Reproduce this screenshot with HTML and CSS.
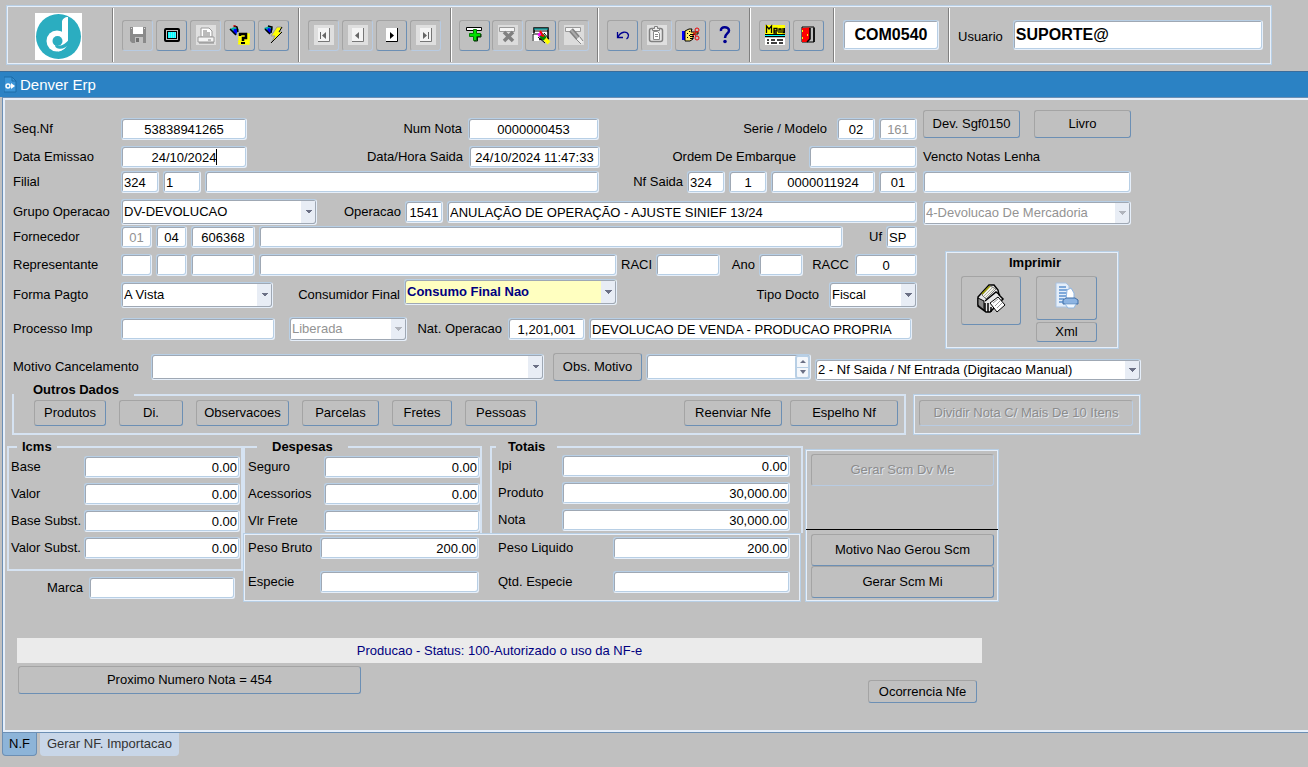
FILE: index.html
```
<!DOCTYPE html>
<html lang="pt-BR">
<head>
    <meta charset="UTF-8">
    <meta name="viewport" content="width=device-width, initial-scale=1.0">
    <title>Denver Erp</title>
    <link rel="stylesheet" href="styles.css">
</head>
<body>
    <header class="toolbar">
        <div class="logo">
            <svg width="47" height="47" viewBox="0 0 47 47">
                <rect width="47" height="47" fill="#fff"/>
                <circle cx="23.5" cy="23.5" r="22.5" fill="#2badc0"/>
                <circle cx="22" cy="28" r="10.5" fill="#fff"/>
                <path d="M27 9C27 6 30 4 33 4V28C33 33 29 38 23 38.500L27 22Z" fill="#fff"/>
                <circle cx="22.500" cy="28" r="5" fill="#2badc0"/>
                <path d="M20 32C26 34 31 31 34 26V31C31 35 27 36.500 23 35.500C21 35 20 34 20 32Z" fill="#2badc0"/>
            </svg>
        </div>
        <div class="group">
            <button class="tool" disabled aria-label="Salvar">
                <svg width="20" height="20" viewBox="0 0 20 20"><path d="M2 2H18V18H4L2 16Z" fill="#8a8a8a"/><path d="M7 12H15V18H7Z" fill="#c0c0c0"/><path d="M5 2H15V9H5Z" fill="#fff"/><path d="M8 13H11V17H8Z" fill="#707070"/><path d="M16 3H17V4H16ZM3 3H4V4H3Z" fill="#ddd"/></svg>
            </button>
            <button class="tool" aria-label="Tela">
                <svg width="20" height="20" viewBox="0 0 20 20"><rect x="3" y="4" width="14" height="12" rx="1" fill="none" stroke="#000" stroke-width="2"/><rect x="5.500" y="6.500" width="9" height="7" fill="#0ff" stroke="#000"/><path d="M7 8H14M7 10H14M7 12H14" stroke="#a8e8ff" stroke-dasharray="1 1"/></svg>
            </button>
            <button class="tool" disabled aria-label="Imprimir">
                <svg width="20" height="20" viewBox="0 0 20 20"><rect width="20" height="20" fill="#dfdfdf"/><path d="M5 3H13L16 6V12H5Z" fill="#fff" stroke="#9a9a9a"/><path d="M7 6H11M7 8H14M7 10H14" stroke="#777"/><path d="M2 12H18V17H2Z" fill="#f4f4f4" stroke="#999"/><path d="M3 18H18M12 15H15" stroke="#888"/></svg>
            </button>
            <button class="tool" aria-label="Entrar consulta">
                <svg width="22" height="22" viewBox="0 0 22 22"><path d="M9 9H21V21H9Z" fill="#ff0" stroke="#c0c0c0" stroke-dasharray="1 1"/><path d="M1 5L5 3L10 5L7 11L4 9Z" fill="#0aa"/><path d="M5 5L9 5L7 11L4 8Z" fill="#00f"/><path d="M5 2L8 3L9 8M1 5L7 11" stroke="#000" stroke-width="1.500" fill="none"/><path d="M4 2H7" stroke="#e00"/><path d="M11 12V10H17V14H14V17" fill="none" stroke="#000" stroke-width="2.500"/><path d="M12 19H16" stroke="#000" stroke-width="2"/></svg>
            </button>
            <button class="tool" aria-label="Executar consulta">
                <svg width="22" height="22" viewBox="0 0 22 22"><path d="M1 4L7 2L10 5L7 10L4 8Z" fill="#0aa"/><path d="M5 4L9 5L7 10L4 7Z" fill="#00f"/><path d="M5 2L9 3L8 9M2 5L7 10" stroke="#000" stroke-width="1.500" fill="none"/><path d="M14 3H19L16 8H19L8 19L12 12H8Z" fill="#ff0" stroke="#999"/><path d="M19 3L16 8M19 8L8 19" stroke="#000" fill="none"/></svg>
            </button>
        </div>
        <div class="group">
            <button class="tool" disabled aria-label="Primeiro">
                <svg width="20" height="20" viewBox="0 0 20 20"><rect width="20" height="20" fill="#dfdfdf"/><path d="M4 3H15V16H4Z" fill="#f4f4f4"/><path d="M4 16.500H15.500V3" fill="none" stroke="#777"/><path d="M6 7H7V14H6ZM12 7V14L8 10.500Z" fill="#666"/></svg>
            </button>
            <button class="tool" disabled aria-label="Anterior">
                <svg width="20" height="20" viewBox="0 0 20 20"><rect width="20" height="20" fill="#dfdfdf"/><path d="M4 3H15V16H4Z" fill="#f4f4f4"/><path d="M4 16.500H15.500V3" fill="none" stroke="#777"/><path d="M11 7V14L7 10.500Z" fill="#666"/></svg>
            </button>
            <button class="tool" aria-label="Proximo">
                <svg width="20" height="20" viewBox="0 0 20 20"><path d="M4 3H15V16H4Z" fill="#fff"/><path d="M4 16.500H15.500V3" fill="none" stroke="#000"/><path d="M8 7V14L12 10.500Z" fill="#000"/></svg>
            </button>
            <button class="tool" disabled aria-label="Ultimo">
                <svg width="20" height="20" viewBox="0 0 20 20"><rect width="20" height="20" fill="#dfdfdf"/><path d="M4 3H15V16H4Z" fill="#f4f4f4"/><path d="M4 16.500H15.500V3" fill="none" stroke="#777"/><path d="M7 7V14L11 10.500ZM12 7H13V14H12Z" fill="#666"/></svg>
            </button>
        </div>
        <div class="group tight">
            <button class="tool" aria-label="Inserir">
                <svg width="20" height="20" viewBox="0 0 20 20"><path d="M1.500 2.500H16.500V5.500H1.500Z" fill="#fff" stroke="#000"/><path d="M8.500 4.500H11.500V8.500H15.500V11.500H11.500V15.500H8.500V11.500H4.500V8.500H8.500Z" fill="#00e000" stroke="#008000"/><path d="M9 16H12.500V12H16V9" stroke="#002800" fill="none"/></svg>
            </button>
            <button class="tool" disabled aria-label="Remover">
                <svg width="20" height="20" viewBox="0 0 20 20"><rect width="20" height="20" fill="#dcdcdc"/><path d="M1.500 2.500H16.500V6.500H1.500Z" fill="#f4f4f4" stroke="#999"/><path d="M6 7L15 16M15 7L6 16" stroke="#808080" stroke-width="3.500"/></svg>
            </button>
            <button class="tool" aria-label="Limpar formulario">
                <svg width="20" height="20" viewBox="0 0 20 20"><path d="M3 3H17V14H3Z" fill="#fff" stroke="#000" stroke-width="1.500"/><path d="M3 4H17" stroke="#088" stroke-width="1.500"/><path d="M3 6H17" stroke="#000"/><path d="M1 8H8V16H1Z" fill="#fff"/><path d="M2 16V9H8" stroke="#000" fill="none"/><path d="M8 8L11 11" stroke="#f0f" stroke-width="5"/><path d="M9 6L11 9" stroke="#f00" stroke-width="2"/><path d="M10 10L14 14" stroke="#080" stroke-width="5"/><path d="M10 10L13 11" stroke="#f00" stroke-width="2"/><path d="M14 14L18 18" stroke="#ff0" stroke-width="4"/><path d="M13 8L18 14M7 12L14 18" stroke="#000"/></svg>
            </button>
            <button class="tool" disabled aria-label="Limpar registro">
                <svg width="20" height="20" viewBox="0 0 20 20"><rect width="20" height="20" fill="#dcdcdc"/><path d="M1.500 2.500H16.500V6.500H1.500Z" fill="#f4f4f4" stroke="#999"/><path d="M7 5L14 13" stroke="#808080" stroke-width="5"/><path d="M7 5L14 13" stroke="#aaa" stroke-width="2"/><path d="M14 13L18 18" stroke="#eee" stroke-width="3"/><path d="M12 14L17 19M16 12L19 16" stroke="#888"/></svg>
            </button>
        </div>
        <div class="group">
            <button class="tool" aria-label="Desfazer">
                <svg width="20" height="20" viewBox="0 0 20 20"><path d="M4.500 7V12.500H10M5 12C8 6 14 6 15.500 10C15.500 12 15 13 13.500 14" fill="none" stroke="#000090" stroke-width="1.300"/></svg>
            </button>
            <button class="tool" disabled aria-label="Colar">
                <svg width="20" height="20" viewBox="0 0 20 20"><rect width="20" height="20" fill="#dfdfdf"/><rect x="2.500" y="3.500" width="13" height="13" rx="2" fill="#e8e8e8" stroke="#808080" stroke-width="1.500"/><path d="M5.500 5.500H12.500V3.500H10.500V1.500H7.500V3.500H5.500Z" fill="#eee" stroke="#808080"/><path d="M6.500 6.500H10.500L12.500 8.500V14.500H6.500Z" fill="#fff" stroke="#888"/><path d="M8 9.500H11M8 11.500H11" stroke="#888"/></svg>
            </button>
            <button class="tool" aria-label="Listar">
                <svg width="20" height="20" viewBox="0 0 20 20"><path d="M1 6H4V15H1Z" fill="#00f"/><path d="M4 6L8 4H11L10 7H17V9H12V14L9 16H4Z" fill="#ffe96a" stroke="#000"/><path d="M6 8H7V9H6ZM8 10H9V11H8ZM6 12H7V13H6ZM8 6H9V7H8Z" fill="#000"/><path d="M9 9.500H14M9 11.500H13M9 13.500H12" stroke="#000"/><circle cx="16" cy="5" r="2" fill="none" stroke="#e00"/><circle cx="16" cy="13" r="2" fill="none" stroke="#e00"/><path d="M12 11L15 7M12 7L15 11" stroke="#e00"/></svg>
            </button>
            <button class="tool" aria-label="Ajuda">
                <svg width="20" height="20" viewBox="0 0 20 20"><path d="M6 6C5 1 14 1 14 5.500C14 8.500 10 8.500 10 13" fill="none" stroke="#000090" stroke-width="2.500"/><circle cx="10" cy="16.500" r="1.800" fill="#000090"/></svg>
            </button>
        </div>
        <div class="group">
            <button class="tool" aria-label="Menu">
                <svg width="20" height="22" viewBox="0 0 20 22"><path d="M0 1H20V10H0Z" fill="#ff0"/><path d="M1.500 9V2L4 5L6.500 2V9M9 7H12V4.500H9V9H12M14 9V5H16V9M18 4V8.500H19.500V4" fill="none" stroke="#000" stroke-width="1.300"/><path d="M0 10H20V13H0Z" fill="#000"/><path d="M0 11.500H20" stroke="#0ff"/><path d="M0 14H20V21H0Z" fill="#fff"/><path d="M2 16H4M6 16H10M12 16H18M2 19H4M6 19H12M14 19H18" stroke="#000" stroke-width="1.500"/></svg>
            </button>
            <button class="tool" aria-label="Sair">
                <svg width="20" height="20" viewBox="0 0 20 20"><path d="M3 2H15V17H3Z" fill="#c0c0c0" stroke="#000"/><path d="M3 3L11 2.500V14L8 17H3Z" fill="#f00"/><path d="M11 3V14L8 17M15 3V17" fill="none" stroke="#000" stroke-width="1.500"/><path d="M3 5H4V7H3ZM3 12H4V14H3ZM8 9H9V11H8Z" fill="#ff0"/></svg>
            </button>
        </div>
        <div class="group">
            <input class="big code" type="text" value="COM0540" aria-label="Programa">
        </div>
        <div class="group user">
            <label for="usuario">Usuario</label>
            <input class="big" id="usuario" type="text" value="SUPORTE@">
        </div>
    </header>

    <div class="titlebar">
        <svg width="14" height="17" viewBox="0 0 14 17"><path d="M0 1H8L12 5V16H0Z" fill="#3b95d8" stroke="#1c6ca8"/><path d="M8 1V5H12" fill="none" stroke="#1c6ca8"/><circle cx="4" cy="10" r="2" fill="none" stroke="#fff" stroke-width="1.500"/><path d="M7 7V13L11 10Z" fill="#fff"/></svg>
        <h1>Denver Erp</h1>
    </div>

    <main class="panel">
        <form class="nota">
            <div class="top">
                <div class="left">
                    <div class="row">
                        <label class="first" for="seq">Seq.Nf</label>
                        <input class="w126 center" id="seq" type="text" value="53838941265">
                        <label class="grow right" for="num">Num Nota</label>
                        <input class="w131 center" id="num" type="text" value="0000000453">
                        <label class="w230 right far" for="serie">Serie / Modelo</label>
                        <input class="w38 center" id="serie" type="text" value="02">
                        <input class="w38 center" type="text" value="161" disabled aria-label="Modelo">
                    </div>
                    <div class="row gap6">
                        <label class="first" for="emissao">Data Emissao</label>
                        <span class="date">
                            <input class="w126 center" id="emissao" type="text" value="24/10/2024">
                            <span class="caret"></span>
                        </span>
                        <label class="grow right" for="saida">Data/Hora Saida</label>
                        <input class="w131 center" id="saida" type="text" value="24/10/2024 11:47:33">
                        <label class="w201 right farther" for="ordem">Ordem De Embarque</label>
                        <input class="w108" id="ordem" type="text">
                    </div>
                    <div class="row gap3">
                        <label class="first" for="filial">Filial</label>
                        <input class="w38" id="filial" type="text" value="324">
                        <input class="w38" type="text" value="1" aria-label="Filial codigo">
                        <input class="grow" type="text" aria-label="Filial nome">
                        <label class="w80 right flush" for="nfsaida">Nf Saida</label>
                        <input class="w38" id="nfsaida" type="text" value="324">
                        <input class="w38 center" type="text" value="1" aria-label="Nf Saida filial">
                        <input class="w104 center" type="text" value="0000011924" aria-label="Nf Saida numero">
                        <input class="w38 center" type="text" value="01" aria-label="Nf Saida serie">
                    </div>
                    <div class="row gap6">
                        <label class="first" for="grupo">Grupo Operacao</label>
                        <select class="w196 tall" id="grupo"><option>DV-DEVOLUCAO</option></select>
                        <label class="w80 right flush" for="operacao">Operacao</label>
                        <input class="w38 center" id="operacao" type="text" value="1541">
                        <input class="grow" type="text" value="ANULAÇÃO DE OPERAÇÃO - AJUSTE SINIEF 13/24" aria-label="Operacao descricao">
                    </div>
                    <div class="row gap1">
                        <label class="first" for="fornecedor">Fornecedor</label>
                        <input class="w31 center" id="fornecedor" type="text" value="01" disabled>
                        <input class="w31 center" type="text" value="04" aria-label="Fornecedor grupo">
                        <input class="w64 center" type="text" value="606368" aria-label="Fornecedor codigo">
                        <input class="grow" type="text" aria-label="Fornecedor nome">
                        <label class="w35 right flush" for="uf">Uf</label>
                        <input class="w31" id="uf" type="text" value="SP">
                    </div>
                    <div class="row gap6">
                        <label class="first" for="repres">Representante</label>
                        <input class="w31" id="repres" type="text">
                        <input class="w31" type="text" aria-label="Representante grupo">
                        <input class="w64" type="text" aria-label="Representante codigo">
                        <input class="grow" type="text" aria-label="Representante nome">
                        <label class="w31" for="raci">RACI</label>
                        <input class="w64" id="raci" type="text">
                        <label class="w31 right flush" for="ano">Ano</label>
                        <input class="w44" id="ano" type="text">
                        <label class="w44 right" for="racc">RACC</label>
                        <input class="w62 center" id="racc" type="text" value="0">
                    </div>
                    <div class="row gap3 row-pagto">
                        <label class="first" for="pagto">Forma Pagto</label>
                        <select class="w152 tall" id="pagto"><option>A Vista</option></select>
                        <label class="grow right flush" for="consumidor">Consumidor Final</label>
                        <select class="w213 tall highlight" id="consumidor"><option>Consumo Final Nao</option></select>
                        <label class="w204 right far" for="docto">Tipo Docto</label>
                        <select class="w88 tall" id="docto"><option>Fiscal</option></select>
                    </div>
                    <div class="row gap9 row-processo">
                        <label class="first" for="processo">Processo Imp</label>
                        <input class="w154" id="processo" type="text">
                        <select class="w118 after" disabled aria-label="Situacao"><option>Liberada</option></select>
                        <label class="w93 right" for="natop">Nat. Operacao</label>
                        <input class="w77 center" id="natop" type="text" value="1,201,001">
                        <input class="grow" type="text" value="DEVOLUCAO DE VENDA - PRODUCAO PROPRIA" aria-label="Natureza descricao">
                    </div>
                </div>

                <div class="side">
                    <div class="side-buttons">
                        <button type="button">Dev. Sgf0150</button>
                        <button type="button">Livro</button>
                    </div>
                    <label class="side-label" for="vencto">Vencto Notas Lenha</label>
                    <input id="vencto" type="text">
                    <select class="side-select" disabled aria-label="Finalidade"><option>4-Devolucao De Mercadoria</option></select>
                    <div class="box print">
                        <h2>Imprimir</h2>
                        <div class="print-buttons">
                            <button class="print-main" type="button" aria-label="Imprimir nota">
                                <svg width="30" height="32" viewBox="0 0 30 32">
                                    <path d="M2 14L13 2H18L22 7L23 12L27 16L14 29L10 29L2 23Z" fill="#e8e8e8" stroke="#000" stroke-width="1.500"/>
                                    <path d="M6 12L14 3L20 6L10 16Z" fill="#f4f4e8" stroke="#777"/>
                                    <path d="M6 11L14 3" stroke="#a0a000" stroke-width="1.500"/>
                                    <path d="M8 13L16 5M9 15L18 6" stroke="#aaa"/>
                                    <path d="M2 15L8 18V27L2 22Z" fill="#8c8c8c" stroke="#000"/>
                                    <path d="M9 18L20 9L24 12M9 20V28M12 20V29M15 24V29" stroke="#000" stroke-width="1.500" fill="none"/>
                                    <path d="M14 20L22 14L29 22L21 29Z" fill="#fff" stroke="#000"/>
                                    <path d="M17 20L22 16M19 23L24 18M21 25L26 20" stroke="#999"/>
                                </svg>
                            </button>
                            <div class="print-xml">
                                <button class="print-doc" type="button" aria-label="Imprimir xml">
                                    <svg width="26" height="28" viewBox="0 0 26 28">
                                        <path d="M2 1H12L15 4V25H2Z" fill="#e4eefa" stroke="#a9c3e2"/>
                                        <path d="M5 5H12M5 8H14M5 11H14M5 14H12M5 17H10M5 20H9" stroke="#7fa9da" stroke-width="2"/>
                                        <path d="M13 8L17 6L20 11V18H12Z" fill="#fff" stroke="#8db4e2"/>
                                        <path d="M9 18L12 16H21L24 18V22H9Z" fill="#8db4e2" stroke="#3f6ea8"/>
                                        <path d="M11 22H22L20 26H14Z" fill="#f2f7fd" stroke="#8fb6e0"/>
                                    </svg>
                                </button>
                                <button class="print-label" type="button">Xml</button>
                            </div>
                        </div>
                    </div>
                </div>
            </div>

            <div class="row gap3 row-motivo">
                <label class="w134" for="motivo">Motivo Cancelamento</label>
                <select class="grow tall" id="motivo"><option></option></select>
                <button class="obs" type="button">Obs. Motivo</button>
                <div class="scroll">
                    <textarea aria-label="Observacao do motivo"></textarea>
                    <span class="spin"><i class="up"></i><i class="down"></i></span>
                </div>
                <select class="w326" aria-label="Tipo de nota"><option>2 - Nf Saida / Nf Entrada (Digitacao Manual)</option></select>
            </div>

            <div class="extras">
                <fieldset class="outros">
                    <legend>Outros Dados</legend>
                    <div class="outros-buttons">
                        <button class="w72" type="button">Produtos</button>
                        <button class="w64" type="button">Di.</button>
                        <button class="w93" type="button">Observacoes</button>
                        <button class="w77" type="button">Parcelas</button>
                        <button class="w60" type="button">Fretes</button>
                        <button class="w72" type="button">Pessoas</button>
                        <div class="nfe-buttons">
                            <button class="w98" type="button">Reenviar Nfe</button>
                            <button class="w108" type="button">Espelho Nf</button>
                        </div>
                    </div>
                </fieldset>
                <div class="box dividir">
                    <button type="button" disabled>Dividir Nota C/ Mais De 10 Itens</button>
                </div>
            </div>
        </form>

        <section class="totals">
            <div class="icms-col">
                <fieldset class="icms">
                    <legend>Icms</legend>
                    <div class="line"><label class="w69" for="base">Base</label><input class="num" id="base" type="text" value="0.00"></div>
                    <div class="line"><label class="w69" for="valor">Valor</label><input class="num" id="valor" type="text" value="0.00"></div>
                    <div class="line"><label class="w69" for="basest">Base Subst.</label><input class="num" id="basest" type="text" value="0.00"></div>
                    <div class="line"><label class="w69" for="valorst">Valor Subst.</label><input class="num" id="valorst" type="text" value="0.00"></div>
                </fieldset>
                <div class="line marca"><label class="grow right" for="marca">Marca</label><input id="marca" type="text"></div>
            </div>

            <div class="values-col">
                <div class="values">
                    <fieldset class="despesas">
                        <legend>Despesas</legend>
                        <div class="line"><label class="w72" for="seguro">Seguro</label><input class="num" id="seguro" type="text" value="0.00"></div>
                        <div class="line"><label class="w72" for="acess">Acessorios</label><input class="num" id="acess" type="text" value="0.00"></div>
                        <div class="line"><label class="w72" for="frete">Vlr Frete</label><input class="num" id="frete" type="text"></div>
                    </fieldset>
                    <fieldset class="totais">
                        <legend>Totais</legend>
                        <div class="line"><label class="w60" for="ipi">Ipi</label><input class="num" id="ipi" type="text" value="0.00"></div>
                        <div class="line"><label class="w60" for="produto">Produto</label><input class="num" id="produto" type="text" value="30,000.00"></div>
                        <div class="line"><label class="w60" for="nota">Nota</label><input class="num" id="nota" type="text" value="30,000.00"></div>
                    </fieldset>
                </div>
                <div class="box peso">
                    <label for="bruto">Peso Bruto</label><input class="num" id="bruto" type="text" value="200.00">
                    <label class="second" for="liquido">Peso Liquido</label><input class="num" id="liquido" type="text" value="200.00">
                    <label for="especie">Especie</label><input id="especie" type="text">
                    <label class="second" for="qtd">Qtd. Especie</label><input id="qtd" type="text">
                </div>
            </div>

            <div class="box scm">
                <button type="button" disabled>Gerar Scm Dv Me</button>
                <hr>
                <button type="button">Motivo Nao Gerou Scm</button>
                <button type="button">Gerar Scm Mi</button>
            </div>
        </section>

        <p class="status">Producao - Status: 100-Autorizado o uso da NF-e</p>
        <div class="bottom">
            <button class="proximo" type="button">Proximo Numero Nota = 454</button>
            <button class="ocorrencia" type="button">Ocorrencia Nfe</button>
        </div>
    </main>

    <nav class="tabs">
        <a class="tab active" href="#nf">N.F</a>
        <a class="tab" href="#importacao">Gerar NF. Importacao</a>
    </nav>
</body>
</html>
```

FILE: styles.css
```
* {
    box-sizing: border-box;
}

body {
    margin: 0;
    min-height: 100vh;
    display: flex;
    flex-direction: column;
    background-color: #c0c0c0;
    color: #000;
    font-family: "Liberation Sans", Arial, sans-serif;
    font-size: 13px;
    line-height: 16px;
}

h1, h2, p {
    margin: 0;
}

label {
    white-space: nowrap;
}

/* Fields */
input, select, textarea {
    height: 22px;
    min-width: 0;
    margin: 0;
    padding: 0 2px;
    border: 1px solid #b8cfe5;
    border-right-color: #e6effa;
    border-bottom-color: #e6effa;
    border-radius: 3px;
    background-color: #fff;
    box-shadow: inset 1px 1px #9fa8b4, inset -1px -1px #b8cfe5;
    color: #000;
    font: inherit;
    outline: none;
}

input:disabled, select:disabled {
    color: #939393;
    opacity: 1;
}

select {
    appearance: none;
    height: 24px;
    padding: 0 16px 0 2px;
    box-shadow: inset 1px 1px #9fa8b4, inset -1px -1px #9fa8b4;
    /* drop-down arrow over its pale strip */
    background-image:
        linear-gradient(45deg, transparent 50%, #6b7085 50%),
        linear-gradient(135deg, #6b7085 50%, transparent 50%),
        linear-gradient(#e8edf5, #e8edf5);
    background-position: right 7px center, right 3px center, right 1px center;
    background-size: 4px 4px, 4px 4px, 14px calc(100% - 2px);
    background-repeat: no-repeat;
}

select:disabled {
    background-image:
        linear-gradient(45deg, transparent 50%, #b0b4bc 50%),
        linear-gradient(135deg, #b0b4bc 50%, transparent 50%),
        linear-gradient(#e8edf5, #e8edf5);
}

select.tall {
    height: 26px;
}

select.highlight {
    background-color: #ffffc0;
    color: #000080;
    font-weight: bold;
}

.num {
    text-align: right;
}

.center {
    text-align: center;
}

.right {
    text-align: right;
    padding-right: 2px;
}

.flush {
    padding-right: 0;
}

.far {
    padding-right: 6px;
}

.farther {
    padding-right: 9px;
}

.grow {
    flex: 1;
}

/* Buttons */
button {
    height: 26px;
    padding: 0;
    border: 1px solid #a4a4a4;
    border-right-color: #6c8fb4;
    border-bottom-color: #6c8fb4;
    border-radius: 3px;
    background-color: #c0c0c0;
    color: #000;
    font: inherit;
    white-space: nowrap;
}

button:disabled {
    border-right-color: #b8cbe2;
    border-bottom-color: #b8cbe2;
    color: #8c8c8c;
    text-shadow: 1px 1px #e0e6ee;
}

/* Toolbar */
.toolbar {
    display: flex;
    height: 60px;
    margin: 5px 36px 6px 6px;
    border: 1px solid #b8cfe5;
    box-shadow: inset 0 0 0 1px #e6effa;
    padding: 2px 0;
}

.logo {
    width: 105px;
    padding: 5px 0 0 28px;
}

.group {
    display: flex;
    align-items: center;
    gap: 3px;
    padding: 0 9px;
    border-left: 1px solid #808080;
    box-shadow: inset 1px 0 #fff;
}

.tight {
    gap: 2px;
    padding: 0 8px;
}

.tool {
    display: flex;
    align-items: center;
    justify-content: center;
    width: 31px;
    height: 31px;
}

.big {
    height: 30px;
    font-size: 16px;
    font-weight: bold;
}

.code {
    width: 96px;
    text-align: center;
}

.user {
    flex: 1;
    gap: 10px;
    padding-right: 8px;
}

.user label {
    padding-top: 4px;
}

.user input {
    flex: 1;
}

/* Title bar */
.titlebar {
    display: flex;
    align-items: center;
    gap: 2px;
    height: 26px;
    padding-left: 4px;
    border-top: 1px solid #3a6d9c;
    background-color: #2b82c4;
    color: #fff;
}

h1 {
    font-size: 15px;
    font-weight: normal;
}

/* Form */
.panel {
    flex: 1;
    margin-left: 2px;
    border: 1px solid #6c8fb4;
    border-right: 0;
    box-shadow: inset 2px 2px #e6effa, inset 0 -2px #e6effa;
    padding: 12px 0 0 4px;
}

.nota {
    margin: 0 167px 0 5px;
}

.top {
    display: flex;
    gap: 6px;
}

.left {
    flex: 1;
    padding-top: 8px;
}

.row {
    display: flex;
    align-items: center;
    gap: 4px;
    padding-left: 1px;
}

.gap1 { margin-top: 1px; }
.gap3 { margin-top: 3px; }
.gap6 { margin-top: 6px; }
.gap9 { margin-top: 9px; }

.first {
    width: 104px;
}

.w31 { width: 31px; }
.w35 { width: 35px; }
.w38 { width: 38px; }
.w44 { width: 44px; }
.w60 { width: 60px; }
.w62 { width: 62px; }
.w64 { width: 64px; }
.w69 { width: 69px; }
.w72 { width: 72px; }
.w77 { width: 77px; }
.w80 { width: 80px; }
.w88 { width: 88px; }
.w93 { width: 93px; }
.w98 { width: 98px; }
.w104 { width: 104px; }
.w108 { width: 108px; }
.w118 { width: 118px; }
.w126 { width: 126px; }
.w131 { width: 131px; }
.w134 { width: 134px; }
.w152 { width: 152px; }
.w154 { width: 154px; }
.w196 { width: 196px; }
.w201 { width: 201px; }
.w204 { width: 204px; }
.w213 { width: 213px; }
.w230 { width: 230px; }
.w326 { width: 326px; }

.date {
    position: relative;
    display: flex;
}

.caret {
    position: absolute;
    left: 95px;
    top: 3px;
    width: 1px;
    height: 16px;
    background-color: #000;
}

.row-pagto {
    height: 29px;
    align-items: flex-end;
}

.row-pagto label {
    line-height: 26px;
}

.row-pagto .highlight {
    align-self: flex-start;
}

.row-processo {
    padding-right: 5px;
}

.after {
    margin-left: 10px;
}

.side {
    display: flex;
    flex-direction: column;
    width: 218px;
    padding-right: 10px;
}

.side-buttons {
    display: flex;
    justify-content: space-between;
}

.side-buttons button {
    width: 97px;
    height: 28px;
}

.side-label {
    margin: 8px 0 3px;
    line-height: 22px;
}

.side-select {
    margin-top: 8px;
}

.box {
    border: 1px solid #b8cfe5;
    box-shadow: inset 0 0 0 1px #e6effa;
}

.print {
    height: 98px;
    margin: 26px 12px 0 22px;
    padding: 3px 21px 0 15px;
}

h2 {
    padding-left: 12px;
    font-size: 13px;
    text-align: center;
}

.print-buttons {
    display: flex;
    justify-content: space-between;
    margin-top: 5px;
}

.print-main {
    width: 60px;
    height: 49px;
}

.print-xml {
    display: flex;
    flex-direction: column;
    gap: 2px;
    width: 61px;
}

.print-doc {
    height: 44px;
}

.print-label {
    height: 20px;
}

.row-motivo {
    height: 29px;
}

.row-motivo .w326 {
    align-self: flex-end;
    height: 22px;
}

.obs {
    width: 89px;
    height: 28px;
    margin-left: 5px;
}

.scroll {
    position: relative;
    display: flex;
    width: 165px;
}

.scroll textarea {
    width: 100%;
    height: 26px;
    resize: none;
    overflow: hidden;
}

.spin {
    position: absolute;
    right: 1px;
    top: 1px;
    width: 15px;
    height: 24px;
    display: flex;
    flex-direction: column;
    align-items: center;
    justify-content: center;
    gap: 7px;
    border: 2px solid #b8cfe5;
    border-radius: 3px;
    background: linear-gradient(#f4f7fb 48%, #b8cfe5 48%, #b8cfe5 53%, #f4f7fb 53%);
}

.up, .down {
    border: 3px solid transparent;
}

.up {
    border-top: 0;
    border-bottom-color: #6b7085;
}

.down {
    border-bottom: 0;
    border-top: 4px solid #6b7085;
}

/* Grouped buttons */
fieldset {
    min-width: 0;
    margin: 0;
    padding: 0;
    border: 2px solid #d6e3f2;
}

legend {
    padding: 0;
    font-weight: bold;
}

.extras {
    display: flex;
    align-items: flex-end;
    gap: 7px;
    margin-top: 1px;
}

.outros {
    flex: 1;
    padding: 0 6px 7px 20px;
}

.outros legend {
    width: 120px;
    margin-left: -20px;
    padding: 0 0 11px 19px;
    line-height: 15px;
}

.outros-buttons {
    display: flex;
    gap: 13px;
    margin-top: -8px;
}

.nfe-buttons {
    display: flex;
    gap: 8px;
    margin-left: auto;
}

.dividir {
    width: 228px;
    height: 41px;
    padding: 5px 7px 0 5px;
}

.dividir button {
    width: 100%;
}

/* Totals */
.totals {
    display: flex;
    align-items: flex-start;
    margin: 4px 309px 0 0;
}

.icms-col {
    width: 236px;
}

.line {
    display: flex;
    align-items: center;
    gap: 4px;
    margin-bottom: 5px;
}

.line input {
    flex: 1;
}

.totals legend {
    line-height: 16px;
}

.icms {
    padding: 1px 1px 5px 2px;
}

.icms legend {
    margin-left: 6px;
    padding: 0 5px;
}

.marca {
    margin: 6px 8px 0 0;
}

.line.marca input {
    flex: none;
    width: 146px;
}

.values-col {
    flex: 1;
}

.values {
    display: flex;
    gap: 8px;
}

.values fieldset {
    height: 94px;
    border-bottom: 0;
}

.despesas {
    width: 239px;
    padding: 1px 0 0 3px;
}

.despesas legend {
    margin-left: 9px;
    padding: 0 15px;
}

.totais {
    flex: 1;
    padding: 0 11px 0 6px;
}

.totais legend {
    margin-left: -2px;
    padding: 0 12px;
}

.peso {
    display: grid;
    grid-template-columns: 68px 159px 126px 1fr;
    gap: 12px 4px;
    align-items: center;
    margin-right: 2px;
    padding: 3px 10px 8px 4px;
}

.peso .second {
    padding-left: 15px;
}

.peso input {
    width: 100%;
}

.scm {
    display: flex;
    flex-direction: column;
    width: 194px;
    height: 153px;
    margin: 10px 0 0 2px;
    padding: 4px 4px 3px 5px;
}

.scm button {
    height: 32px;
    flex: none;
}

.scm hr {
    width: 192px;
    margin: auto 0 4px -5px;
    border: 0;
    border-top: 1px solid #000;
}

/* Status */
.status {
    margin: 36px 326px 0 10px;
    background-color: #ebebeb;
    color: #000080;
    line-height: 25px;
    text-align: center;
}

.bottom {
    display: flex;
    justify-content: space-between;
    margin: 3px 331px 28px 11px;
}

.proximo {
    width: 343px;
    height: 28px;
}

.ocorrencia {
    width: 109px;
    height: 23px;
    margin-top: 14px;
}

/* Tabs */
.tabs {
    display: flex;
    gap: 3px;
    height: 34px;
    padding-left: 2px;
}

.tab {
    height: 23px;
    padding: 0 7px;
    border-radius: 0 0 4px 4px;
    background-color: #c8d6e8;
    color: #333;
    line-height: 22px;
    text-decoration: none;
}

.tab.active {
    padding: 0 6px;
    border: 1px solid #6c8fb4;
    border-top: 0;
    background-color: #8db4d8;
    color: #000;
}
```
